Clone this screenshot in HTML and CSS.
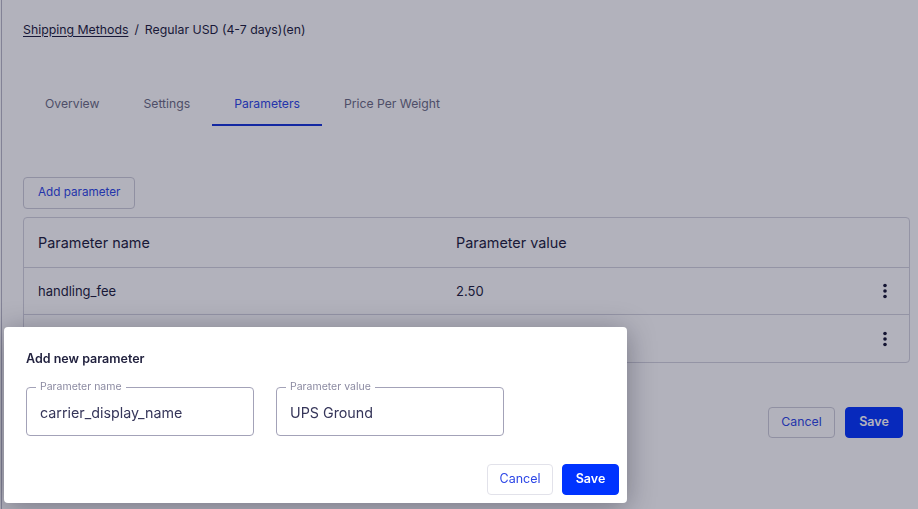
FILE: index.html
```html
<!DOCTYPE html>
<html lang="en">
<head>
<meta charset="utf-8">
<title>Regular USD (4-7 days)(en)</title>
<link rel="stylesheet" href="styles.css">
</head>
<body>
<div class="page">
  <nav class="breadcrumb">
    <a href="#" class="crumb-link">Shipping Methods</a>
    <span class="crumb-sep">/</span>
    <span class="crumb-current">Regular USD (4-7 days)(en)</span>
  </nav>

  <div class="tabs">
    <div class="tab">Overview</div>
    <div class="tab">Settings</div>
    <div class="tab tab-active">Parameters</div>
    <div class="tab">Price Per Weight</div>
  </div>

  <button class="btn btn-outline add-btn">Add parameter</button>

  <div class="table">
    <div class="row row-head">
      <div class="cell">Parameter name</div>
      <div class="cell">Parameter value</div>
      <div class="cell"></div>
    </div>
    <div class="row">
      <div class="cell">handling_fee</div>
      <div class="cell">2.50</div>
      <div class="cell cell-menu">
        <svg class="kebab" width="6" height="18" viewBox="0 0 6 18"><circle cx="3" cy="3.5" r="1.8"/><circle cx="3" cy="9" r="1.8"/><circle cx="3" cy="14.5" r="1.8"/></svg>
      </div>
    </div>
    <div class="row row-last">
      <div class="cell">&nbsp;</div>
      <div class="cell">&nbsp;</div>
      <div class="cell cell-menu">
        <svg class="kebab" width="6" height="18" viewBox="0 0 6 18"><circle cx="3" cy="3.5" r="1.8"/><circle cx="3" cy="9" r="1.8"/><circle cx="3" cy="14.5" r="1.8"/></svg>
      </div>
    </div>
  </div>

  <div class="page-actions">
    <button class="btn btn-outline btn-cancel">Cancel</button>
    <button class="btn btn-primary btn-save">Save</button>
  </div>
</div>

<div class="overlay"></div>

<div class="dialog">
  <h2 class="dialog-title">Add new parameter</h2>
  <div class="fields">
    <div class="field">
      <span class="field-label">Parameter name</span>
      <span class="field-value">carrier_display_name</span>
    </div>
    <div class="field">
      <span class="field-label">Parameter value</span>
      <span class="field-value">UPS Ground</span>
    </div>
  </div>
  <div class="dialog-actions">
    <button class="btn btn-outline btn-light dlg-cancel">Cancel</button>
    <button class="btn btn-primary dlg-save">Save</button>
  </div>
</div>
</body>
</html>
```

FILE: styles.css
```css
* { box-sizing: border-box; }

html, body {
  margin: 0;
  padding: 0;
  height: 100%;
}

body {
  background: #ffffff;
  font-family: Inter, "Noto Sans", "Liberation Sans", sans-serif;
  color: #1a1a3a;
  overflow: hidden;
}

.page {
  margin-left: 1px;
  border-left: 1px solid #b8b8c6;
  min-height: 100%;
  padding: 22px 8px 0 21px;
}

.breadcrumb {
  font-size: 12.3px;
  line-height: 16px;
  display: flex;
  gap: 6px;
  color: #1a1a3a;
}

.crumb-link {
  color: #1a1a3a;
  text-decoration: underline;
  text-underline-offset: 2px;
}

.tabs {
  display: flex;
  margin-top: 42px;
}

.tab {
  font-size: 12.2px;
  line-height: 16px;
  padding: 16px 22px 12px;
  border-bottom: 2px solid transparent;
  color: #6b6b82;
}

.tab-active {
  color: #2b45e6;
  border-bottom-color: #1232d8;
}

.btn {
  font-family: inherit;
  font-size: 12.5px;
  height: 31px;
  border-radius: 4px;
  cursor: pointer;
  line-height: 1;
}

.btn-outline {
  background: #ffffff;
  border: 1px solid #cdcdd8;
  color: #2b45e6;
}

.btn-primary {
  background: #0033ff;
  border: 1px solid #0033ff;
  color: #ffffff;
  font-weight: 600;
}

.add-btn {
  margin-top: 51px;
  padding: 0 14px;
  font-size: 11.7px;
  height: 32px;
  display: block;
}

.table {
  margin-top: 8px;
  border: 1px solid #d3d3dd;
  border-radius: 4px;
}

.row {
  display: grid;
  grid-template-columns: 418px 1fr 49px;
  align-items: center;
  height: 47px;
  border-top: 1px solid #d3d3dd;
  font-size: 13px;
}

.row-head {
  border-top: none;
  height: 49px;
  font-size: 14.4px;
}

.row-last { height: 48px; }

.cell {
  padding-left: 14px;
}

.cell-menu {
  padding-left: 0;
  display: flex;
  justify-content: center;
}

.kebab {
  fill: #141432;
  display: block;
}

.page-actions {
  display: flex;
  justify-content: flex-end;
  gap: 10px;
  margin-top: 44px;
  padding-right: 7px;
}

.btn-cancel { padding: 0; width: 67px; font-size: 12.3px; }
.btn-save { padding: 0; width: 58px; }

.overlay {
  position: fixed;
  inset: 0;
  background: rgba(20, 20, 52, 0.33);
}

.dialog {
  position: fixed;
  left: 4px;
  top: 327px;
  width: 623px;
  height: 176px;
  background: #ffffff;
  border-radius: 4px;
  box-shadow: 0 4px 28px rgba(10, 10, 30, 0.35);
  padding: 24px 8px 8px 22px;
  display: flex;
  flex-direction: column;
}

.dialog-title {
  margin: 0;
  font-size: 12.5px;
  line-height: 16px;
  font-weight: 600;
  color: #22223f;
}

.fields {
  display: flex;
  gap: 22px;
  margin-top: 20px;
}

.field {
  position: relative;
  width: 228px;
  height: 49px;
  border: 1px solid #a3a2b8;
  border-radius: 4px;
  display: flex;
  align-items: center;
  padding-left: 13px;
}

.field-label {
  position: absolute;
  top: -7px;
  left: 9px;
  padding: 0 4px;
  background: #ffffff;
  font-size: 10.5px;
  line-height: 12px;
  color: #8c8ba2;
}

.field-value {
  font-size: 14.3px;
  color: #36365a;
  margin-top: 1px;
}

.dialog-actions {
  margin-top: auto;
  display: flex;
  justify-content: flex-end;
  gap: 9px;
}

.btn-light { border-color: #e2e2ea; }

.dlg-cancel { width: 66px; padding: 0; }
.dlg-save { width: 57px; padding: 0; }
```
